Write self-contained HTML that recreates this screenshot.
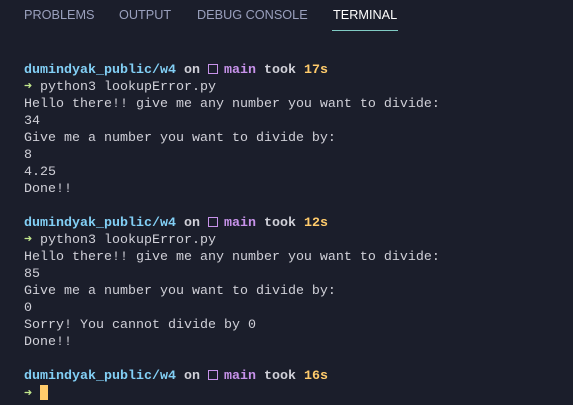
<!DOCTYPE html>
<html><head><style>
html,body{margin:0;padding:0;background:#1b1e2b;width:573px;height:405px;overflow:hidden}
.tabs{position:absolute;top:0;left:24px;height:32px;font:12.7px "Liberation Sans",sans-serif;color:#9aa0bd}
.tab{position:absolute;top:8px;white-space:nowrap}
.act{color:#fff}
.ul{position:absolute;left:332px;top:30px;width:66px;height:1px;background:#80cbc4}
pre{position:absolute;left:24px;top:62px;margin:0;font:13.33px/17px "Liberation Mono",monospace;color:#d0d0d8}
.c{color:#82cff5;font-weight:bold}.w{color:#d0d0d8;font-weight:bold}.p{color:#c792ea;font-weight:bold}.y{color:#ffcb6b;font-weight:bold}.g{color:#c3e88d}
.box{display:inline-block;width:10px;height:10px;border:1.5px solid #c792ea;box-sizing:border-box;vertical-align:-1px;margin-right:-2px}
.cur{display:inline-block;width:8px;height:15px;background:#ffcb6b;vertical-align:-3px}
</style></head><body>
<div class="tabs">
<span class="tab" style="left:0">PROBLEMS</span>
<span class="tab" style="left:95px">OUTPUT</span>
<span class="tab" style="left:173px">DEBUG CONSOLE</span>
<span class="tab act" style="left:309px">TERMINAL</span>
</div>
<div class="ul"></div>
<pre><span class="c">dumindyak_public/w4</span> <span class="w">on</span> <span class="box"></span> <span class="p">main</span> <span class="w">took</span> <span class="y">17s</span>
<span class="g">➜</span> python3 lookupError.py
Hello there!! give me any number you want to divide:
34
Give me a number you want to divide by:
8
4.25
Done!!

<span class="c">dumindyak_public/w4</span> <span class="w">on</span> <span class="box"></span> <span class="p">main</span> <span class="w">took</span> <span class="y">12s</span>
<span class="g">➜</span> python3 lookupError.py
Hello there!! give me any number you want to divide:
85
Give me a number you want to divide by:
0
Sorry! You cannot divide by 0
Done!!

<span class="c">dumindyak_public/w4</span> <span class="w">on</span> <span class="box"></span> <span class="p">main</span> <span class="w">took</span> <span class="y">16s</span>
<span class="g">➜</span> <span class="cur"></span></pre>
</body></html>
